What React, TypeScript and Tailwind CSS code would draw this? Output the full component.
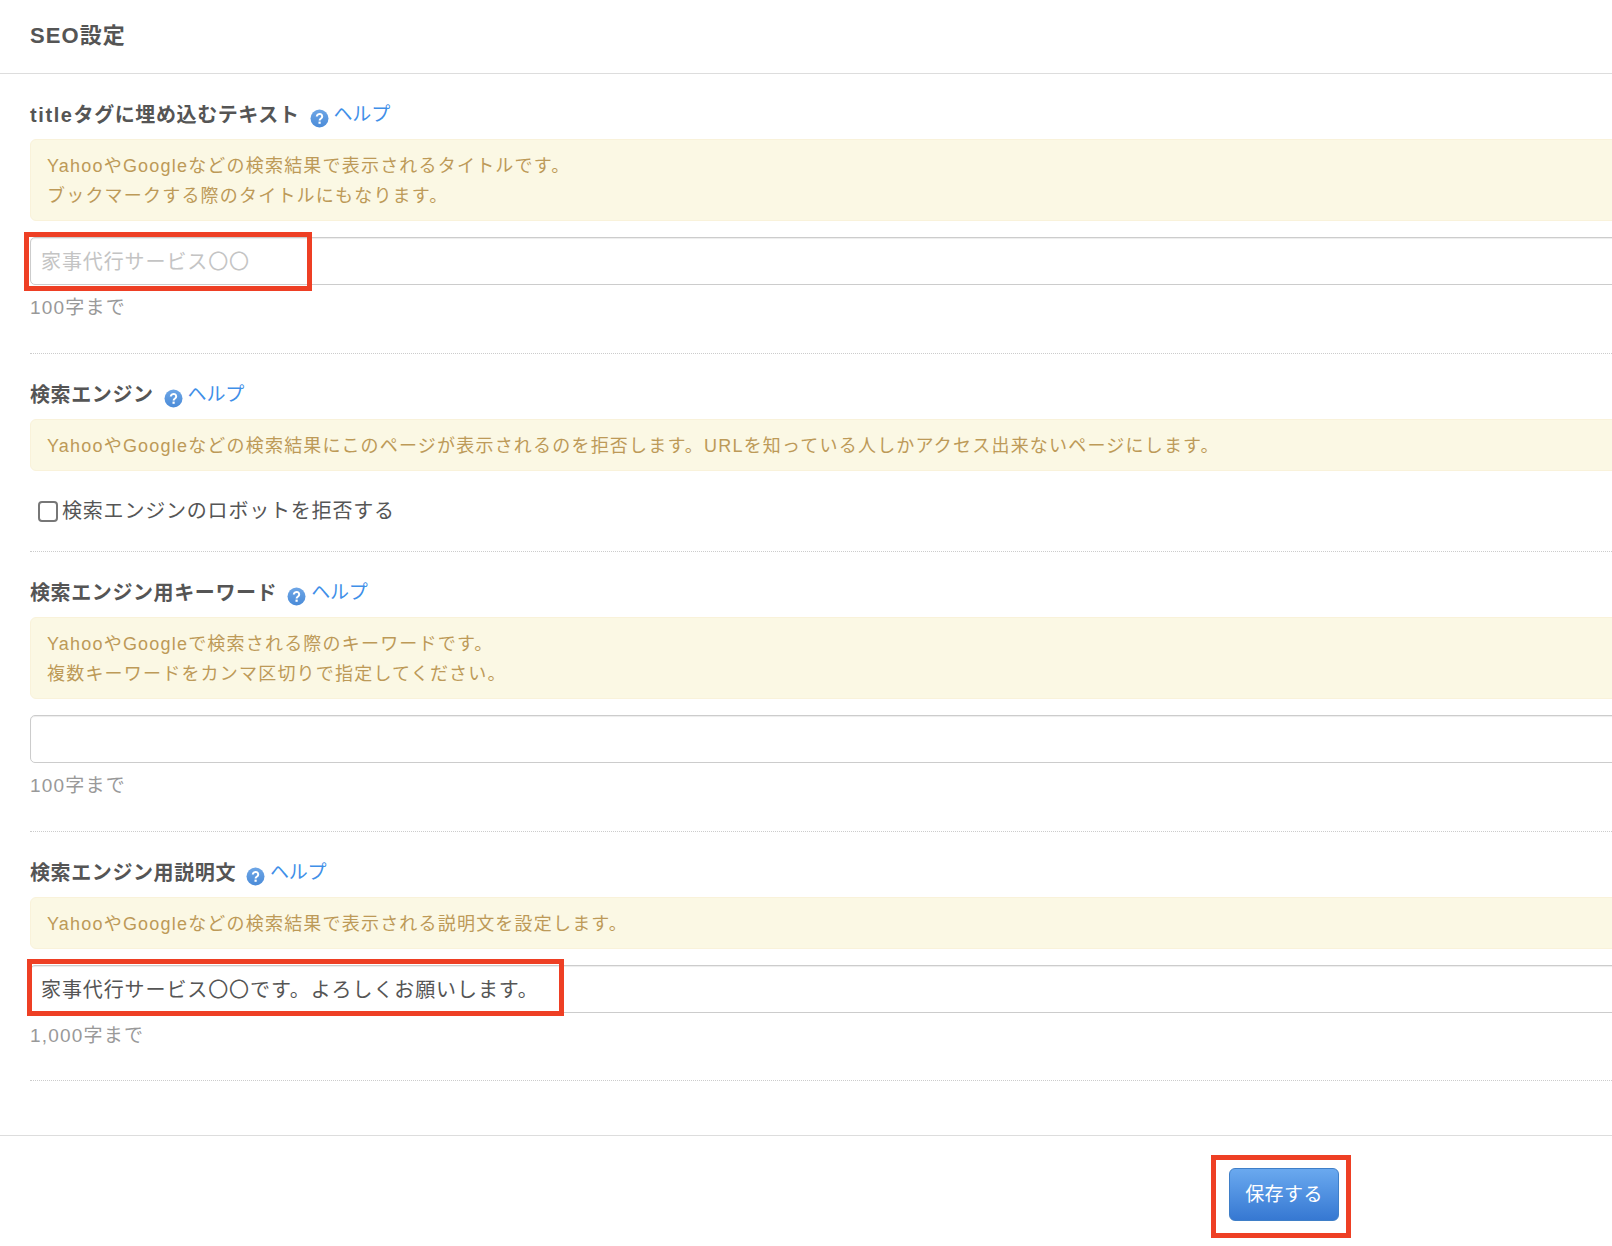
import type { ReactNode } from "react";

const font = "[font-family:'Liberation_Sans','Noto_Sans_CJK_JP',sans-serif]";

const HelpIcon = () => (
  <svg width="19" height="19" viewBox="0 0 19 19" className="mt-[6px]">
    <defs>
      <linearGradient id="help" x1="0" y1="0" x2="0" y2="1">
        <stop offset="0" stopColor="#6ea6e6" />
        <stop offset="1" stopColor="#4a8bd8" />
      </linearGradient>
    </defs>
    <circle cx="9.5" cy="9.5" r="9" fill="url(#help)" />
    <path d="M6.8 7.4a2.7 2.5 0 1 1 4.2 2.1c-1 .7-1.4 1-1.4 2" fill="none" stroke="#fff" strokeWidth="2" />
    <rect x="8.5" y="12.6" width="2.2" height="2.2" fill="#fff" />
  </svg>
);

const Label = ({ children }: { children: ReactNode }) => (
  <div className="flex items-center h-[30px] pt-[2px]">
    <span className="text-[20px] font-bold text-[#555555] tracking-[0.6px]">{children}</span>
    <span className="ml-[10px] mr-[5px] flex">
      <HelpIcon />
    </span>
    <a className="text-[19px] tracking-[-0.2px] text-[#3f8fe8]">ヘルプ</a>
  </div>
);

const Notice = ({ lines }: { lines: string[] }) => (
  <div className="mt-[10px] rounded-[6px] border border-[#f9f2da] bg-[#fbf8e4] pl-[16px] pt-[11px] pb-[9px] text-[18px] leading-[30px] tracking-[1.2px] text-[#bd9a58]">
    {lines.map((line) => (
      <div key={line}>{line}</div>
    ))}
  </div>
);

const Hint = ({ text }: { text: string }) => (
  <div className="mt-[8px] h-[30px] text-[19px] leading-[30px] tracking-[1.2px] text-[#999999]">{text}</div>
);

const Field = ({ value, placeholder }: { value?: string; placeholder?: string }) => (
  <div className="mt-[16px] h-[48px] rounded-[5px] border border-[#cccccc] bg-white px-[10px] pt-[1px] text-[20px] leading-[46px] tracking-[0.9px] shadow-[inset_0_1px_1px_rgba(0,0,0,0.075)]">
    {value ? <span className="text-[#555555]">{value}</span> : <span className="text-[#c4c4c4]">{placeholder}</span>}
  </div>
);

const Marker = ({ className }: { className: string }) => (
  <div className={`absolute border-[5px] border-[#ee3f24] ${className}`}></div>
);

export default function App() {
  return (
    <div className={`w-[1612px] h-[1246px] overflow-hidden bg-white ${font}`}>
      <div className="h-[74px] border-b border-[#dddddd] pl-[30px] pt-[18px]">
        <h1 className="text-[22px] leading-[36px] font-bold tracking-[1.1px] text-[#555555]">SEO設定</h1>
      </div>

      <div className="w-[1700px] pl-[30px]">
        <section className="h-[280px] border-b border-dotted border-[#cccccc] pt-[25px]">
          <Label>
            <span className="tracking-[1.6px]">title</span>タグに埋め込むテキスト
          </Label>
          <Notice lines={["YahooやGoogleなどの検索結果で表示されるタイトルです。", "ブックマークする際のタイトルにもなります。"]} />
          <div className="relative">
            <Field placeholder="家事代行サービス〇〇" />
            <Marker className="left-[-6px] top-[-5px] h-[59px] w-[288px]" />
          </div>
          <Hint text="100字まで" />
        </section>

        <section className="h-[198px] border-b border-dotted border-[#cccccc] pt-[25px]">
          <Label>検索エンジン</Label>
          <Notice lines={["YahooやGoogleなどの検索結果にこのページが表示されるのを拒否します。URLを知っている人しかアクセス出来ないページにします。"]} />
          <label className="mt-[25px] flex items-center pl-[8px] text-[20px] leading-[30px] tracking-[0.8px] text-[#555555]">
            <span className="h-[21px] w-[20px] rounded-[4px] border-2 border-[#777777] bg-white"></span>
            <span className="ml-[4px]">検索エンジンのロボットを拒否する</span>
          </label>
        </section>

        <section className="h-[280px] border-b border-dotted border-[#cccccc] pt-[25px]">
          <Label>検索エンジン用キーワード</Label>
          <Notice lines={["YahooやGoogleで検索される際のキーワードです。", "複数キーワードをカンマ区切りで指定してください。"]} />
          <Field />
          <Hint text="100字まで" />
        </section>

        <section className="h-[249px] border-b border-dotted border-[#cccccc] pt-[25px]">
          <Label>検索エンジン用説明文</Label>
          <Notice lines={["YahooやGoogleなどの検索結果で表示される説明文を設定します。"]} />
          <div className="relative">
            <Field value="家事代行サービス〇〇です。よろしくお願いします。" />
            <Marker className="left-[-3px] top-[-6px] h-[57px] w-[537px]" />
          </div>
          <Hint text="1,000字まで" />
        </section>
      </div>

      <div className="mt-[54px] flex h-[111px] justify-end border-t border-[#dddddd] pr-[273px] pt-[32px]">
        <div className="relative">
          <button className="h-[53px] w-[110px] rounded-[6px] border border-[#3f7fc8] bg-gradient-to-b from-[#6aa9ef] to-[#3678d2] pt-[2px] text-[19px] tracking-[0.4px] text-white">
            保存する
          </button>
          <Marker className="left-[-18px] top-[-13px] h-[83px] w-[140px]" />
        </div>
      </div>
    </div>
  );
}
